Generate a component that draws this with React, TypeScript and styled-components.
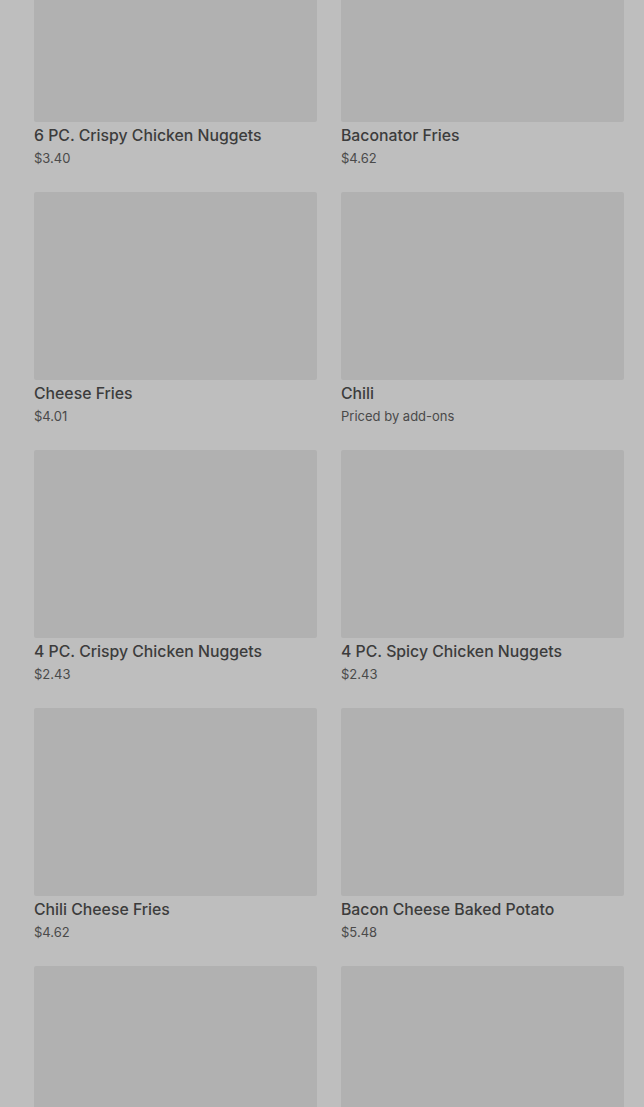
import styled, { createGlobalStyle } from 'styled-components'

const GlobalStyle = createGlobalStyle`
  html, body {
    margin: 0;
    padding: 0;
    background: #bebebe;
    font-family: Inter, Roboto, "Liberation Sans", sans-serif;
    overflow: hidden;
  }
`

const Page = styled.div`
  height: 1107px;
  overflow: hidden;
  background: #bebebe;
`

const Grid = styled.div`
  display: grid;
  grid-template-columns: 283px 283px;
  column-gap: 24px;
  margin-top: -66px;
  padding: 0 20px 0 34px;
`

const Card = styled.div`
  display: flex;
  flex-direction: column;
  height: 258px;
`

const Thumb = styled.div`
  height: 188px;
  background: #b1b1b1;
  border-radius: 2px;
`

const Title = styled.div`
  margin-top: 4px;
  font-size: 15.8px;
  line-height: 20px;
  font-weight: 500;
  color: #3c3c3c;
`

const Price = styled.div`
  margin-top: 4px;
  font-size: 13px;
  line-height: 17px;
  color: #4a4a4a;
`

type Item = { name: string; price: string }

const items: Item[] = [
  { name: '6 PC. Crispy Chicken Nuggets', price: '$3.40' },
  { name: 'Baconator Fries', price: '$4.62' },
  { name: 'Cheese Fries', price: '$4.01' },
  { name: 'Chili', price: 'Priced by add-ons' },
  { name: '4 PC. Crispy Chicken Nuggets', price: '$2.43' },
  { name: '4 PC. Spicy Chicken Nuggets', price: '$2.43' },
  { name: 'Chili Cheese Fries', price: '$4.62' },
  { name: 'Bacon Cheese Baked Potato', price: '$5.48' },
  { name: '', price: '' },
  { name: '', price: '' }
]

const App = () => {
  return (
    <Page>
      <GlobalStyle />
      <Grid>
        {items.map((item, i) => (
          <Card key={i}>
            <Thumb />
            {item.name && <Title>{item.name}</Title>}
            {item.price && <Price>{item.price}</Price>}
          </Card>
        ))}
      </Grid>
    </Page>
  )
}

export default App
